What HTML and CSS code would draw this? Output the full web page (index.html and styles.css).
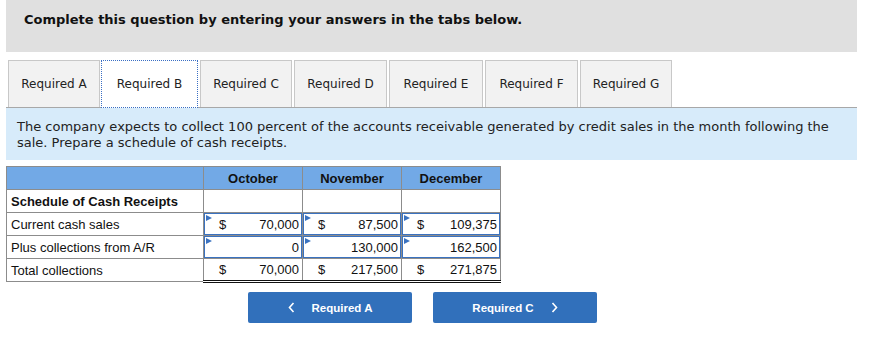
FILE: index.html
```html
<!DOCTYPE html>
<html>
<head>
<meta charset="utf-8">
<link rel="stylesheet" href="styles.css">
</head>
<body>
<div class="page">
  <div class="header">Complete this question by entering your answers in the tabs below.</div>
  <div class="tabs">
    <div class="tab w-a">Required A</div>
    <div class="tab active w-b">Required B</div>
    <div class="tab w-c">Required C</div>
    <div class="tab w-d">Required D</div>
    <div class="tab w-e">Required E</div>
    <div class="tab w-f">Required F</div>
    <div class="tab w-g">Required G</div>
  </div>
  <div class="info">The company expects to collect 100 percent of the accounts receivable generated by credit sales in the month following the sale. Prepare a schedule of cash receipts.</div>
  <table class="sched">
    <colgroup><col class="c-label"><col class="c-num"><col class="c-num"><col class="c-num"></colgroup>
    <tr class="head"><th></th><th>October</th><th>November</th><th>December</th></tr>
    <tr><td class="label bold">Schedule of Cash Receipts</td><td></td><td></td><td></td></tr>
    <tr>
      <td class="label">Current cash sales</td>
      <td class="inp"><div class="box"><span class="flag"></span><span class="cur">$</span><span class="val">70,000</span></div></td>
      <td class="inp"><div class="box"><span class="flag"></span><span class="cur">$</span><span class="val">87,500</span></div></td>
      <td class="inp"><div class="box"><span class="flag"></span><span class="cur">$</span><span class="val">109,375</span></div></td>
    </tr>
    <tr>
      <td class="label">Plus collections from A/R</td>
      <td class="inp"><div class="box"><span class="flag"></span><span class="cur"></span><span class="val">0</span></div></td>
      <td class="inp"><div class="box"><span class="flag"></span><span class="cur"></span><span class="val">130,000</span></div></td>
      <td class="inp"><div class="box"><span class="flag"></span><span class="cur"></span><span class="val">162,500</span></div></td>
    </tr>
    <tr class="total">
      <td class="label">Total collections</td>
      <td class="tot"><div class="cell"><span class="cur">$</span><span class="val">70,000</span></div></td>
      <td class="tot"><div class="cell"><span class="cur">$</span><span class="val">217,500</span></div></td>
      <td class="tot"><div class="cell"><span class="cur">$</span><span class="val">271,875</span></div></td>
    </tr>
  </table>
  <div class="nav">
    <div class="btn"><svg class="chev" width="7" height="11" viewBox="0 0 7 11"><path d="M5.5 1 L1.5 5.5 L5.5 10" fill="none" stroke="#fff" stroke-width="1.6"/></svg><span>Required A</span></div>
    <div class="btn"><span>Required C</span><svg class="chev" width="7" height="11" viewBox="0 0 7 11"><path d="M1.5 1 L5.5 5.5 L1.5 10" fill="none" stroke="#fff" stroke-width="1.6"/></svg></div>
  </div>
</div>
</body>
</html>
```
FILE: styles.css
```css
html, body { margin: 0; padding: 0; background: #fff; }
.page { padding-left: 6px; width: 851px; font-family: "DejaVu Sans", Verdana, sans-serif; color: #1a1a1a; }
.header { height: 52px; box-sizing: border-box; background: #e0e0e0; padding: 12px 18px 0; font-weight: bold; font-size: 13px; line-height: 16px; color: #111; }
.tabs { display: flex; gap: 2px; margin-top: 8px; padding-left: 2px; height: 47px; }
.tab { box-sizing: border-box; height: 47px; border: 1px solid #c8c8c8; border-bottom: none; background: #f2f2f2; font-size: 12px; display: flex; align-items: center; justify-content: center; color: #222; }
.tab.active { background: #fff; border: 1px dotted #3a6fc4; outline: 1px dotted #3a6fc4; outline-offset: -1px; height: 48px; position: relative; z-index: 1; }
.w-a { width: 92px; } .w-b { width: 97px; margin-left: -1px; } .w-c { width: 92px; } .w-d { width: 93px; } .w-e { width: 94px; } .w-f { width: 93px; } .w-g { width: 92px; }
.info { height: 53px; box-sizing: border-box; background: #d7ebfa; border-top: 1px solid #a8a8a8; padding: 11px 11px 0; font-size: 13px; line-height: 16px; color: #222; }
.sched { margin-top: 6px; border-collapse: collapse; font-family: "Liberation Sans", Arial, sans-serif; font-size: 13px; color: #111; table-layout: fixed; width: 494px; }
.c-label { width: 197px; } .c-num { width: 99px; }
.sched th, .sched td { border: 1px solid #8c8c8c; height: 23px; padding: 0; box-sizing: border-box; }
.sched tr.head th { background: #72a9e6; font-weight: bold; font-size: 13px; text-align: center; }
.label { padding-left: 4px !important; }
.bold { font-weight: bold; }
.inp { position: relative; }
.box { position: relative; display: flex; justify-content: space-between; align-items: center; height: 22px; border: 1px solid #3a72c0; box-sizing: border-box; padding: 0 2px 0 14px; margin: 0; }
.cell { display: flex; justify-content: space-between; align-items: center; height: 21px; padding: 0 3px 0 15px; }
.flag { position: absolute; left: 1px; top: 1px; width: 0; height: 0; border-top: 3px solid transparent; border-bottom: 3px solid transparent; border-left: 6px solid #3a72c0; }
.sched tr.total td.tot { border-top: 1px solid #111; border-bottom: 3px double #111; }
.nav { display: flex; gap: 21px; margin-top: 9px; padding-left: 242px; }
.btn { width: 164px; height: 31px; background: #3170bb; border-radius: 2px; color: #fff; font-family: "Liberation Sans", Arial, sans-serif; font-weight: bold; font-size: 11.5px; display: flex; align-items: center; justify-content: center; gap: 17px; }
.chev { display: block; }
```
